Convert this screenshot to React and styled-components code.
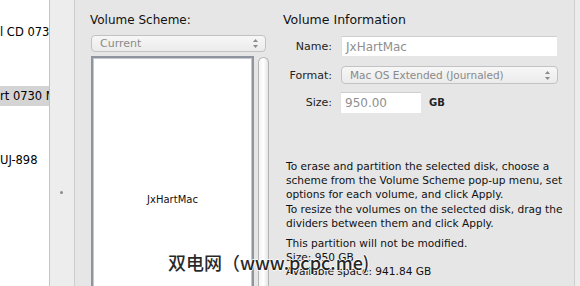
import styled, { createGlobalStyle } from "styled-components";

const GlobalStyle = createGlobalStyle`
  html, body {
    margin: 0;
    padding: 0;
    background: #ffffff;
  }
  body {
    font-family: "DejaVu Sans", "Noto Sans CJK SC", sans-serif;
  }
`;

const Window = styled.div`
  position: relative;
  display: flex;
  width: 580px;
  height: 286px;
  overflow: hidden;
`;

const Sidebar = styled.div`
  width: 49px;
  flex-shrink: 0;
  background: #ffffff;
  border-right: 1px solid #c4c4c4;
  overflow: hidden;
`;

const SidebarList = styled.div`
  padding-top: 22px;
`;

const SidebarRow = styled.div`
  height: 20px;
  line-height: 20px;
  margin-bottom: ${(p) => p.gap}px;
  font-size: 11.5px;
  color: #000;
  white-space: nowrap;
  width: 220px;
  background: ${(p) => (p.selected ? "#d4d4d4" : "transparent")};
`;

const Splitter = styled.div`
  width: 24px;
  flex-shrink: 0;
  background: #ededed;
  border-right: 1px solid #cdcdcd;
  display: flex;
  align-items: center;
  justify-content: center;
`;

const Dimple = styled.div`
  width: 3px;
  height: 3px;
  border-radius: 50%;
  background: #8a8a8a;
  margin-top: 98px;
  margin-left: -1px;
`;

const Main = styled.div`
  width: 500px;
  flex-shrink: 0;
  background: #e6e6e6;
  border-right: 1px solid #cfcfcf;
  display: flex;
  padding-top: 12px;
  box-sizing: border-box;
`;

const Edge = styled.div`
  flex: 1;
  background: #ececec;
`;

const SchemeColumn = styled.div`
  width: 181px;
  margin-left: 15px;
  display: flex;
  flex-direction: column;
`;

const Heading = styled.div`
  font-size: ${(p) => p.size || 12}px;
  color: #111;
  height: 16px;
  line-height: 16px;
  margin-bottom: ${(p) => p.after || 0}px;
`;

const Popup = styled.div`
  display: flex;
  align-items: center;
  justify-content: space-between;
  box-sizing: border-box;
  width: ${(p) => p.width}px;
  height: ${(p) => p.height}px;
  margin-left: ${(p) => p.indent || 0}px;
  padding: 0 6px 0 8px;
  border: 1px solid #c2c2c2;
  border-radius: 4px;
  background: linear-gradient(#f7f7f7, #ebebeb);
  font-size: ${(p) => p.size || 11}px;
  color: #8a8a8a;
`;

const Stepper = () => (
  <svg width="7" height="11" viewBox="0 0 7 11">
    <path d="M3.5 1 L6 4 H1 Z" fill="#8a8a8a" />
    <path d="M3.5 10 L6 7 H1 Z" fill="#8a8a8a" />
  </svg>
);

const MapRow = styled.div`
  display: flex;
  gap: 4px;
  margin-top: 4px;
  margin-left: 1px;
  flex: 1;
`;

const MapBox = styled.div`
  width: 163px;
  box-sizing: border-box;
  border: 2px solid #8f959e;
  border-bottom: none;
  box-shadow: inset 1px 1px 0 #c5c9cf, inset -1px 0 0 #c5c9cf;
  background: #ffffff;
  display: flex;
  align-items: center;
  justify-content: center;
  font-size: 10px;
  color: #111;
  padding-top: 54px;
`;

const ScrollTrack = styled.div`
  width: 11px;
  margin-top: 1px;
  box-sizing: border-box;
  border: 1px solid #b4b4b4;
  border-bottom: none;
  border-radius: 6px 6px 0 0;
  background: linear-gradient(90deg, #f4f4f4, #ffffff 50%, #e4e4e4);
`;

const InfoColumn = styled.div`
  margin-left: 12px;
  display: flex;
  flex-direction: column;
  width: 290px;
`;

const FormRow = styled.div`
  display: flex;
  align-items: center;
  margin-top: ${(p) => p.top}px;
`;

const Label = styled.div`
  width: 49px;
  text-align: right;
  font-size: 11px;
  color: #222;
  margin-right: ${(p) => p.gap || 9}px;
`;

const Field = styled.div`
  box-sizing: border-box;
  width: ${(p) => p.width}px;
  height: ${(p) => p.height}px;
  background: #ffffff;
  border-top: 1px solid #cfcfcf;
  border-left: 1px solid #e2e2e2;
  padding-left: 4px;
  display: flex;
  align-items: center;
  font-size: 12px;
  color: #8f8f8f;
`;

const Unit = styled.div`
  margin-left: 8px;
  font-size: 10px;
  font-weight: bold;
  color: #222;
`;

const Help = styled.div`
  margin-top: 46px;
  margin-left: 3px;
  font-size: 10.6px;
  line-height: 14.2px;
  color: #111;
  width: 286px;
`;

const Paragraph = styled.p`
  margin: 0 0 ${(p) => p.after || 0}px 0;
`;

const Watermark = styled.div`
  position: absolute;
  left: 168px;
  top: 249px;
  font-family: "Noto Sans CJK SC", "DejaVu Sans", sans-serif;
  font-size: 18px;
  font-weight: 500;
  line-height: 26px;
  color: #111;
  white-space: nowrap;
  opacity: 0.9;
  text-shadow: 1px 0 0 #fff, -1px 0 0 #fff, 0 1px 0 #fff, 0 -1px 0 #fff;
`;

export default function App() {
  return (
    <>
      <GlobalStyle />
      <Window>
        <Sidebar>
          <SidebarList>
            <SidebarRow gap={44}>l CD 0730</SidebarRow>
            <SidebarRow gap={44} selected>
              rt 0730 Media
            </SidebarRow>
            <SidebarRow gap={0}>UJ-898</SidebarRow>
          </SidebarList>
        </Sidebar>
        <Splitter>
          <Dimple />
        </Splitter>
        <Main>
          <SchemeColumn>
            <Heading after={7}>Volume Scheme:</Heading>
            <Popup width={175} height={17} indent={1}>
              <span>Current</span>
              <Stepper />
            </Popup>
            <MapRow>
              <MapBox>JxHartMac</MapBox>
              <ScrollTrack />
            </MapRow>
          </SchemeColumn>
          <InfoColumn>
            <Heading size={12.5}>Volume Information</Heading>
            <FormRow top={8}>
              <Label>Name:</Label>
              <Field width={216} height={20}>JxHartMac</Field>
            </FormRow>
            <FormRow top={10}>
              <Label>Format:</Label>
              <Popup width={217} height={18} size={10.5}>
                <span>Mac OS Extended (Journaled)</span>
                <Stepper />
              </Popup>
            </FormRow>
            <FormRow top={8}>
              <Label gap={8}>Size:</Label>
              <Field width={81} height={21}>950.00</Field>
              <Unit>GB</Unit>
            </FormRow>
            <Help>
              <Paragraph>
                To erase and partition the selected disk, choose a scheme from
                the Volume Scheme pop-up menu, set options for each volume, and
                click Apply.
              </Paragraph>
              <Paragraph after={6}>
                To resize the volumes on the selected disk, drag the dividers
                between them and click Apply.
              </Paragraph>
              <Paragraph>This partition will not be modified.</Paragraph>
              <Paragraph>Size: 950 GB</Paragraph>
              <Paragraph>Available space: 941.84 GB</Paragraph>
            </Help>
          </InfoColumn>
        </Main>
        <Edge />
        <Watermark>双电网（www.pcpc.me)</Watermark>
      </Window>
    </>
  );
}
